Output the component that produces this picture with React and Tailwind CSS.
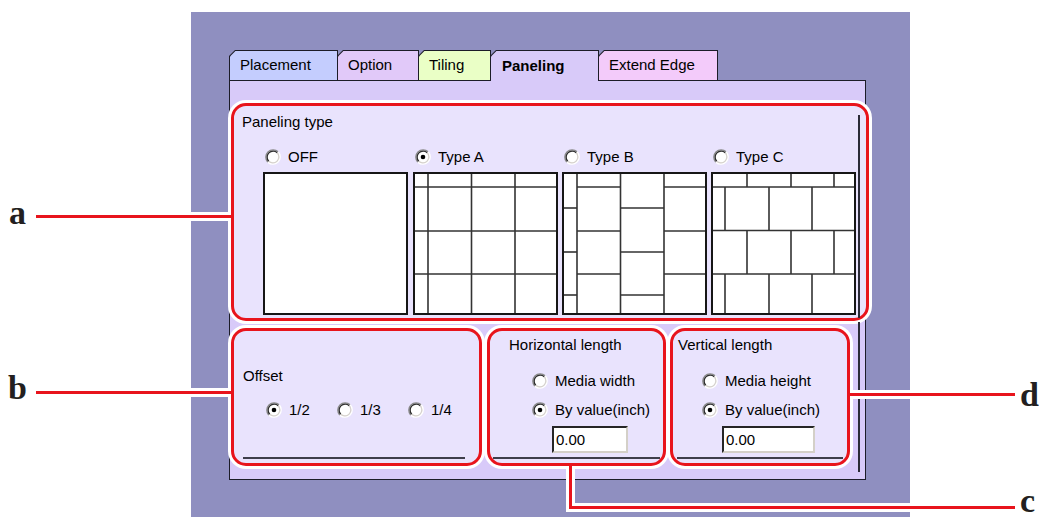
import React from 'react'

const TABS = [
  { label: 'Placement', w: 'w-[109px]', bg: 'bg-[#c4cdfe]' },
  { label: 'Option', w: 'w-[82px]', bg: 'bg-[#e1c9f9]' },
  { label: 'Tiling', w: 'w-[73px]', bg: 'bg-[#eaffc6]' },
  { label: 'Paneling', w: 'w-[109px]', bg: 'bg-[#d8caf9]', active: true },
  { label: 'Extend Edge', w: 'w-[120px]', bg: 'bg-[#f3cbfa]' },
]

// preview line sets, in box coords (145 x 143)
const full = (xs, ys) => [
  ...xs.map((x) => [x, 0, x, 143]),
  ...ys.map((y) => [0, y, 145, y]),
]
const TYPE_A = full([15, 58.5, 102], [15, 59, 102])
const TYPE_B = [
  ...[15, 58.5, 102].map((x) => [x, 0, x, 143]),
  ...[36, 80, 123].map((y) => [0, y, 15, y]),
  ...[15, 59, 102].map((y) => [15, y, 58.5, y]),
  ...[36, 80, 123].map((y) => [58.5, y, 102, y]),
  ...[15, 59, 102].map((y) => [102, y, 145, y]),
]
const TYPE_C = [
  ...[15, 58.5, 102].map((y) => [0, y, 145, y]),
  ...[36, 80, 123].map((x) => [x, 0, x, 15]),
  ...[14, 58, 101].map((x) => [x, 15, x, 58.5]),
  ...[36, 80, 123].map((x) => [x, 58.5, x, 102]),
  ...[14, 58, 101].map((x) => [x, 102, x, 143]),
]

function Radio({ checked }) {
  return (
    <svg width="16" height="16" viewBox="0 0 16 16" className="shrink-0">
      <circle cx="8" cy="8" r="6.4" fill="#fff" />
      <path d="M2.84 13.16A7.3 7.3 0 0 1 13.16 2.84" stroke="#8a8a8a" strokeWidth="1.4" fill="none" />
      <path d="M13.16 2.84A7.3 7.3 0 0 1 2.84 13.16" stroke="#ffffff" strokeWidth="1.4" fill="none" />
      <path d="M3.76 12.24A6 6 0 0 1 12.24 3.76" stroke="#2e2e2e" strokeWidth="1.3" fill="none" />
      <path d="M12.24 3.76A6 6 0 0 1 3.76 12.24" stroke="#d6d2cc" strokeWidth="1.3" fill="none" />
      {checked && <circle cx="8" cy="8" r="2.3" fill="#000" />}
    </svg>
  )
}

function RadioLabel({ checked, children, className = '' }) {
  return (
    <div className={`flex h-[17px] items-center gap-[7px] leading-[17px] ${className}`}>
      <Radio checked={checked} />
      <span className="whitespace-nowrap">{children}</span>
    </div>
  )
}

function Preview({ lines = [], className = '' }) {
  return (
    <svg width="145" height="143" viewBox="0 0 145 143" className={`block shrink-0 bg-white ${className}`}>
      {lines.map(([x1, y1, x2, y2], i) => (
        <line key={i} x1={x1} y1={y1} x2={x2} y2={y2} stroke="#333" strokeWidth="1.6" />
      ))}
      <rect x="1" y="1" width="143" height="141" fill="none" stroke="#161616" strokeWidth="2" />
    </svg>
  )
}

function Tab({ label, w, bg, active, first }) {
  return (
    <div
      className={`${first ? '' : '-ml-px'} ${w} ${
        active ? 'relative z-10 h-[31px]' : 'h-[30px]'
      } bg-[#1c1c28] px-px pt-px [clip-path:polygon(6px_0,100%_0,100%_100%,0_100%,0_6px)]`}
    >
      <div
        className={`flex h-full items-center ${bg} ${
          active ? 'pl-[11px] font-bold' : 'pl-[10px]'
        } [clip-path:polygon(5.4px_0,100%_0,100%_100%,0_100%,0_5.4px)]`}
      >
        {label}
      </div>
    </div>
  )
}

function SunkenInput({ w }) {
  return (
    <div
      className={`${w} h-[27px] border-2 border-[#262626] border-b-[#d4d0c8] border-r-[#d4d0c8] bg-white pl-[2px] leading-[23px]`}
    >
      0.00
    </div>
  )
}

const callout =
  'shrink-0 rounded-[15px] border-[3px] border-[#e8141c] bg-[#e9e3fd] shadow-[0_0_0_3px_#fff]'

function Label({ children, className }) {
  return (
    <div
      className={`absolute font-['Liberation_Serif','Times_New_Roman',serif] text-[34px] font-bold leading-none text-[#231f20] ${className}`}
    >
      {children}
    </div>
  )
}

export default function App() {
  return (
    <div className="relative h-[518px] w-[1039px] overflow-hidden bg-white pt-[12px] font-['Liberation_Sans',Arial,sans-serif] text-[15px] text-black">
      <div className="ml-[191px] h-[505px] w-[719px] bg-[#8f8fc0] pl-[38px] pt-[38px]">
        {/* tabs */}
        <div className="flex h-[30px] items-start">
          {TABS.map((t, i) => (
            <Tab key={t.label} {...t} first={i === 0} />
          ))}
        </div>

        {/* tab page */}
        <div className="h-[400px] w-[637px] border border-[#1c1c28] bg-[#d8caf9] pl-px pt-[22px]">
          {/* a: paneling type */}
          <div className={`${callout} flex h-[218px] w-[638px]`}>
            <div className="w-[624px] pl-[8px] pt-[7px]">
              <div className="h-[17px] leading-[17px]">Paneling type</div>
              <div className="mt-[18px] grid grid-cols-[150px_149px_149px_149px] pl-[23px]">
                <RadioLabel>OFF</RadioLabel>
                <RadioLabel checked>Type A</RadioLabel>
                <RadioLabel>Type B</RadioLabel>
                <RadioLabel>Type C</RadioLabel>
              </div>
              <div className="mt-[7px] flex gap-[4px] pl-[21px]">
                <Preview className="mr-px" />
                <Preview lines={TYPE_A} />
                <Preview lines={TYPE_B} />
                <Preview lines={TYPE_C} />
              </div>
            </div>
            <div className="mt-[9px] w-[2px] self-stretch bg-[#2a2a36]" />
          </div>

          {/* bottom row */}
          <div className="mt-[7px] flex items-start">
            {/* b: offset */}
            <div className={`${callout} h-[138px] w-[251px] pt-[36px]`}>
              <div className="h-[17px] pl-[9px] leading-[17px]">Offset</div>
              <div className="mt-[17px] flex pl-[32px]">
                <RadioLabel checked className="w-[72px]">1/2</RadioLabel>
                <RadioLabel className="w-[72px]">1/3</RadioLabel>
                <RadioLabel className="w-[72px]">1/4</RadioLabel>
              </div>
              <div className="ml-[9px] mt-[39px] h-[2px] w-[222px] bg-[#3e3e4a]" />
            </div>

            {/* c: horizontal length */}
            <div className={`${callout} ml-[5px] h-[138px] w-[179px] pt-[5px]`}>
              <div className="h-[17px] pl-[19px] leading-[17px]">Horizontal length</div>
              <RadioLabel className="ml-[42px] mt-[19px]">Media width</RadioLabel>
              <RadioLabel checked className="ml-[42px] mt-[12px]">By value(inch)</RadioLabel>
              <div className="ml-[62px] mt-[8px]">
                <SunkenInput w="w-[76px]" />
              </div>
              <div className="ml-[3px] mt-[4px] h-[2px] w-[167px] bg-[#3e3e4a]" />
            </div>

            {/* d: vertical length */}
            <div className={`${callout} ml-[4px] h-[138px] w-[180px] pt-[5px]`}>
              <div className="h-[17px] pl-[5px] leading-[17px]">Vertical length</div>
              <RadioLabel className="ml-[29px] mt-[19px]">Media height</RadioLabel>
              <RadioLabel checked className="ml-[29px] mt-[12px]">By value(inch)</RadioLabel>
              <div className="ml-[49px] mt-[8px]">
                <SunkenInput w="w-[93px]" />
              </div>
              <div className="ml-[4px] mt-[4px] h-[2px] w-[166px] bg-[#3e3e4a]" />
            </div>

            <div className="-mt-[6px] ml-[8px] h-[150px] w-[2px] bg-[#2a2a36]" />
          </div>
        </div>
      </div>

      {/* callout leader lines */}
      <div className="absolute left-[36px] top-[212px] h-[9px] w-[195px] border-y-[3px] border-white bg-[#e8141c]" />
      <div className="absolute left-[36px] top-[388px] h-[9px] w-[195px] border-y-[3px] border-white bg-[#e8141c]" />
      <div className="absolute left-[850px] top-[390px] h-[9px] w-[165px] border-y-[3px] border-white bg-[#e8141c]" />
      <div className="absolute left-[566px] top-[466px] h-[46px] w-[9px] border-x-[3px] border-b-[3px] border-white bg-[#e8141c]" />
      <div className="absolute left-[572px] top-[503px] h-[9px] w-[443px] border-y-[3px] border-white bg-[#e8141c]" />

      <Label className="left-[9px] top-[196px]">a</Label>
      <Label className="left-[8px] top-[371px]">b</Label>
      <Label className="left-[1020px] top-[378px]">d</Label>
      <Label className="left-[1020px] top-[484px]">c</Label>
    </div>
  )
}
